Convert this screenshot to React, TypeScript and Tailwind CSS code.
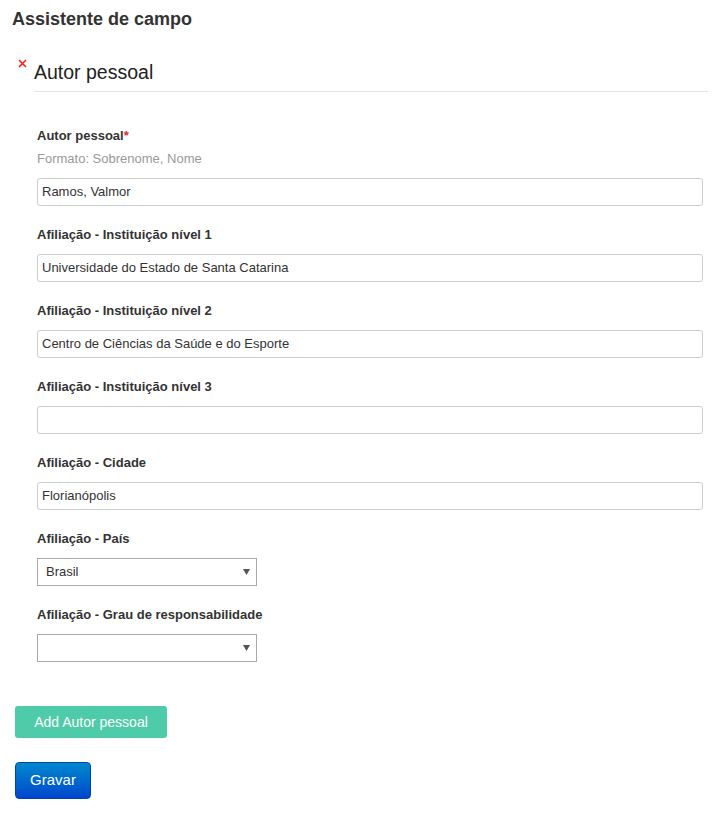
import React from "react";

type Field = {
  label: string;
  value?: string;
  kind: "text" | "select";
  required?: boolean;
  help?: string;
};

const fields: Field[] = [
  {
    label: "Autor pessoal",
    value: "Ramos, Valmor",
    kind: "text",
    required: true,
    help: "Formato: Sobrenome, Nome",
  },
  {
    label: "Afiliação - Instituição nível 1",
    value: "Universidade do Estado de Santa Catarina",
    kind: "text",
  },
  {
    label: "Afiliação - Instituição nível 2",
    value: "Centro de Ciências da Saúde e do Esporte",
    kind: "text",
  },
  { label: "Afiliação - Instituição nível 3", value: "", kind: "text" },
  { label: "Afiliação - Cidade", value: "Florianópolis", kind: "text" },
  { label: "Afiliação - País", value: "Brasil", kind: "select" },
  { label: "Afiliação - Grau de responsabilidade", value: "", kind: "select" },
];

function FieldRow({ field }: { field: Field }) {
  return (
    <div className="mb-[19px]">
      <div className="text-[13px] leading-5 font-bold text-[#333]">
        {field.label}
        {field.required && <span className="text-[#e0262b]">*</span>}
      </div>
      {field.help && (
        <div className="mt-[3px] text-[13px] leading-5 text-[#999]">
          {field.help}
        </div>
      )}
      {field.kind === "text" ? (
        <div className="mt-[9px] h-[28px] w-[666px] rounded-[3px] border border-[#ccc] bg-white px-[4px] text-[13px] leading-[26px] text-[#333]">
          {field.value}
        </div>
      ) : (
        <div className="mt-[9px] flex h-[28px] w-[220px] items-center justify-between border border-[#aaa] bg-white pl-[8px] pr-[6px] text-[13px] text-[#333]">
          <span>{field.value}</span>
          <svg width="7" height="6" viewBox="0 0 7 6">
            <path d="M0 0H7L3.5 6Z" fill="#555" />
          </svg>
        </div>
      )}
    </div>
  );
}

export default function App() {
  return (
    <div
      className="min-h-[813px] bg-white text-[#333]"
      style={{ fontFamily: '"Liberation Sans", Arial, sans-serif' }}
    >
      <h1 className="pl-3 pt-[7px] text-[18px] leading-6 font-bold text-[#333]">
        Assistente de campo
      </h1>

      {/* Bloco do autor */}
      <div className="mt-[27px] flex">
        <div className="w-[34px] shrink-0 pl-[18px] pt-[1px]">
          <svg width="9" height="9" viewBox="0 0 9 9">
            <path d="M1 1L8 8M8 1L1 8" stroke="#ff1a1a" strokeWidth="1.6" />
          </svg>
        </div>
        <div className="w-[674px]">
          <h2 className="border-b border-[#e5e5e5] pb-[5px] text-[19.5px] leading-7 font-normal text-[#222]">
            Autor pessoal
          </h2>
          <div className="pl-[3px] pt-[34px]">
            {fields.map((f) => (
              <FieldRow key={f.label} field={f} />
            ))}
          </div>
        </div>
      </div>

      <div className="pl-[15px] pt-[25px]">
        <button className="h-[32px] w-[152px] rounded-[3px] bg-[#4ecba8] text-[14px] text-white">
          Add Autor pessoal
        </button>
      </div>
      <div className="pl-[15px] pt-[24px]">
        <button className="h-[37px] w-[76px] rounded-[4px] border border-[#0044aa] bg-gradient-to-b from-[#0088cc] to-[#0044cc] text-[15px] text-white">
          Gravar
        </button>
      </div>
    </div>
  );
}
